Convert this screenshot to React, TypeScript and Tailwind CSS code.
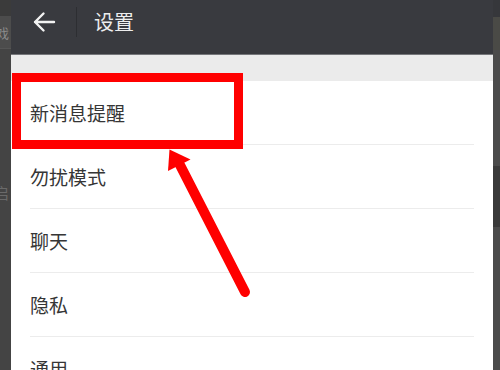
import React from "react";

const items = ["新消息提醒", "勿扰模式", "聊天", "隐私", "通用"];

const App = () => {
  return (
    <div
      className="relative w-[500px] h-[370px] overflow-hidden flex bg-[#454545]"
      style={{ fontFamily: '"Noto Sans CJK SC", "Noto Sans", sans-serif' }}
    >
      {/* page behind, left edge */}
      <div className="w-[11px] shrink-0 flex flex-col overflow-hidden">
        <div className="h-[16px] shrink-0 bg-[#3b3b3b]" />
        <div className="h-[33px] shrink-0 bg-[#4c4c4c] border-b border-[#555] flex items-center overflow-hidden">
          <span className="-ml-[17px] text-[13px] text-[#8a8a8a] whitespace-nowrap leading-none">游戏</span>
        </div>
        <div className="flex-1 bg-[#444] overflow-hidden">
          <div className="mt-[136px] -ml-[6px] text-[15px] text-[#6a6a6a] leading-none">启</div>
        </div>
      </div>

      {/* settings screen */}
      <div className="w-[482px] shrink-0 flex flex-col bg-white overflow-hidden">
        <div className="h-[55px] shrink-0 bg-[#393a3f] border-b border-[#75767a]">
          <div className="h-[44px] flex items-center">
            <svg width="24" height="22" viewBox="0 0 24 22" className="ml-[21px]">
              <path d="M22 11H3M11.5 2.5L3 11l8.5 8.5" fill="none" stroke="#f2f2f2" strokeWidth="2.4" strokeLinecap="round" strokeLinejoin="round" />
            </svg>
            <div className="ml-[20px] w-px h-[30px] bg-[#2d2e32]" />
            <span className="ml-[17px] text-[20px] text-[#ededed] leading-none">设置</span>
          </div>
        </div>
        <div className="h-[26px] shrink-0 bg-[#ebebeb]" />
        <div className="flex flex-col shrink-0">
          {items.map((t) => (
            <div key={t} className="mx-[19px] h-[64px] shrink-0 border-b border-[#ececec] flex items-center">
              <span className="text-[19px] text-[#363636] leading-none">{t}</span>
            </div>
          ))}
        </div>
      </div>

      {/* page behind, right edge */}
      <div className="w-[7px] shrink-0 flex flex-col">
        <div className="h-[17px] shrink-0 bg-[#36373b]" />
        <div className="h-[33px] shrink-0 bg-[#4a4a46]" />
        <div className="h-[116px] shrink-0 bg-[#4b4b4b]" />
        <div className="h-[61px] shrink-0 bg-[#3a3a3a]" />
        <div className="flex-1 bg-[#4b4b4b]" />
      </div>

      {/* annotation */}
      <div className="absolute left-[12px] top-[73px] w-[231px] h-[76px] border-[9px] border-[#ff0000]" />
      <svg className="absolute inset-0" width="500" height="370" viewBox="0 0 500 370">
        <line x1="245" y1="292" x2="180" y2="165" stroke="#ff0000" strokeWidth="10" strokeLinecap="round" />
        <polygon points="169.5,149.5 190.5,159.5 168,171" fill="#ff0000" />
      </svg>
    </div>
  );
};

export default App;
